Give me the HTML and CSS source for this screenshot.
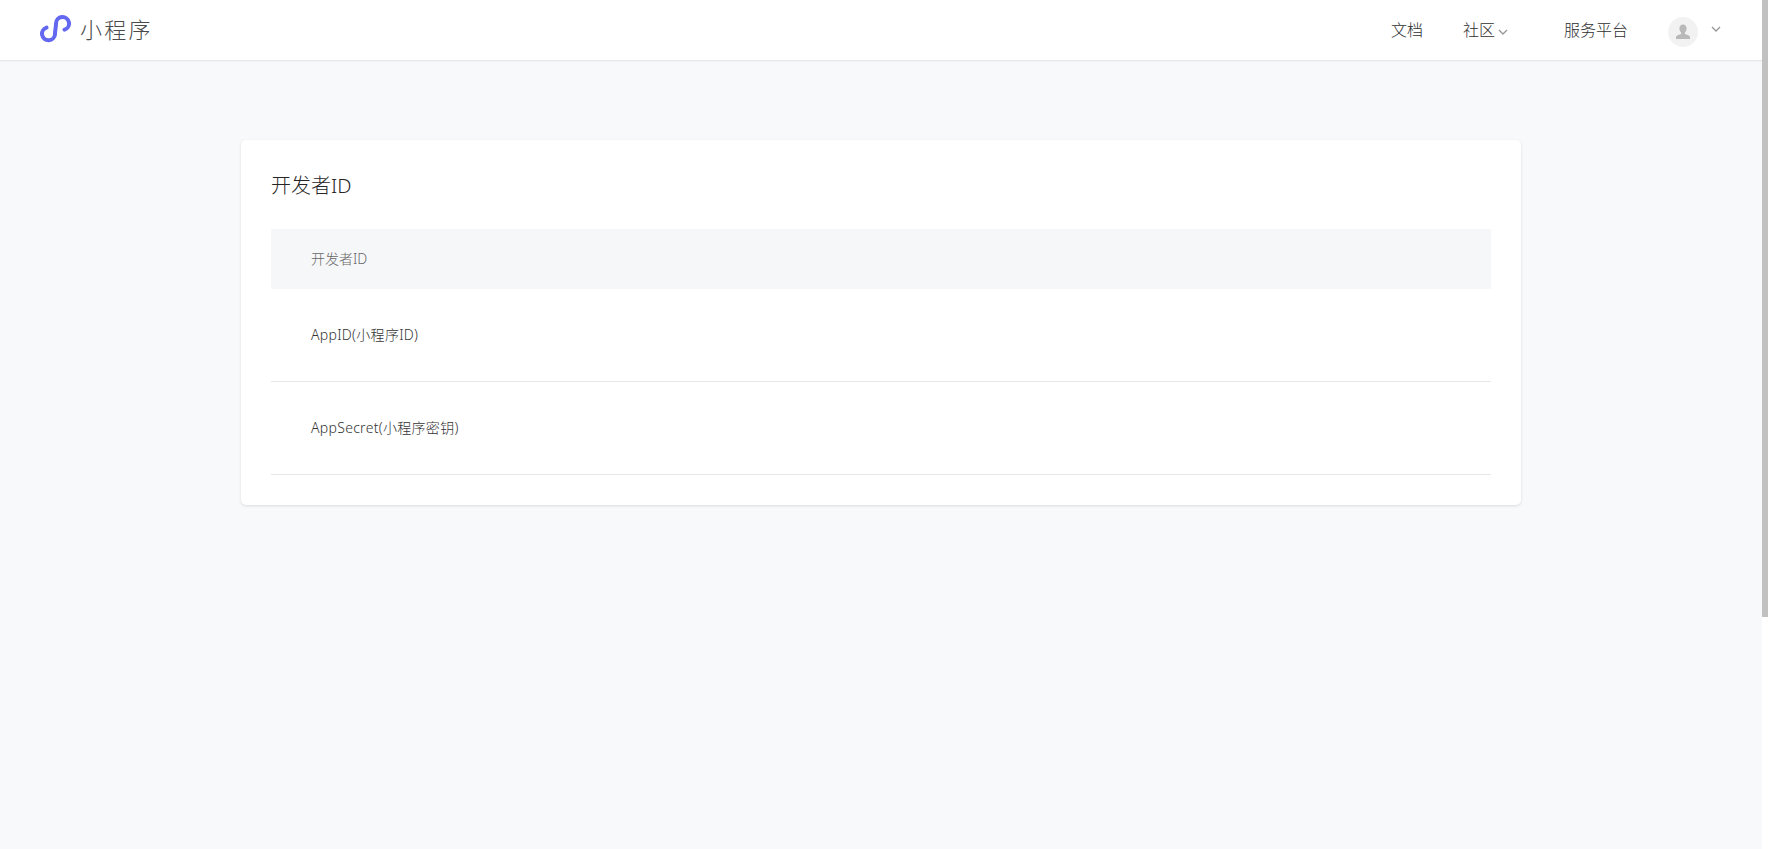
FILE: index.html
```html
<!DOCTYPE html>
<html lang="zh-CN">
<head>
<meta charset="utf-8">
<title>小程序</title>
<link rel="stylesheet" href="styles.css">
</head>
<body>
<header class="topbar">
  <a class="brand">
    <svg class="brand-logo" viewBox="0 0 31 28" width="31" height="28" aria-hidden="true">
      <path d="M6.500 12.600A6.500 6.500 0 1 0 15 19.300C15 15 16 12.500 16 8.500A6.500 6.500 0 1 1 24.500 14.700" fill="none" stroke="#6467f0" stroke-width="4" stroke-linecap="round"/>
    </svg>
    <span class="brand-name">小程序</span>
  </a>
  <nav class="nav">
    <a class="nav-doc">文档</a>
    <a class="nav-community">社区<svg class="chev chev-community" viewBox="0 0 10 6" width="10" height="6"><path d="M1 1l4 4 4-4" fill="none" stroke="#999" stroke-width="1.400"/></svg></a>
    <a class="nav-platform">服务平台</a>
    <span class="avatar"><svg viewBox="0 0 18 18" width="18" height="18"><path d="M9 1.500c2.300 0 3.600 1.800 3.600 4 0 1.700-.7 3.100-1.700 4v1.500c1.700.8 4.300 1.200 5.100 2.800V16H2v-2.200c.8-1.600 3.400-2 5.100-2.800V9.500c-1-.9-1.700-2.300-1.700-4 0-2.200 1.300-4 3.600-4z" fill="#b9b9b9"/></svg></span>
    <svg class="chev chev-user" viewBox="0 0 10 6" width="10" height="6"><path d="M1 1l4 4 4-4" fill="none" stroke="#999" stroke-width="1.400"/></svg>
  </nav>
</header>
<main class="main">
  <section class="card">
    <h2 class="card-title">开发者ID</h2>
    <div class="table">
      <div class="row row-head">开发者ID</div>
      <div class="row">AppID(小程序ID)</div>
      <div class="row">AppSecret(小程序密钥)</div>
    </div>
  </section>
</main>
<div class="scrollbar"><div class="scrollbar-thumb"></div></div>
</body>
</html>
```
FILE: styles.css
```css
* { box-sizing: border-box; }
html { height: 100%; background: #f8f9fb; }
body {
  margin: 0 6px 0 0;
  min-height: 100vh;
  background: #f8f9fb;
  font-family: "Noto Sans", "Noto Sans CJK SC", sans-serif;
  color: #333;
}
.topbar {
  height: 61px;
  background: #fff;
  border-bottom: 1px solid #e6e7e9;
  box-shadow: 0 1px 2px rgba(0,0,0,.03);
  display: flex;
  align-items: center;
  justify-content: space-between;
  padding: 0 41px 0 40px;
}
.brand { display: flex; align-items: center; margin-top: -2px; }
.brand-logo { display: block; margin-right: 9px; }
.brand-name { font-size: 22px; letter-spacing: 2.2px; color: #4a4a4a; font-weight: 300; line-height: 30px; }
.nav { display: flex; align-items: center; font-size: 16px; color: #2e2e2e; font-weight: 300; margin-top: 3px; }
.nav a { display: flex; align-items: center; padding-bottom: 6px; }
.nav-doc { margin-right: 40px; }
.nav-community { margin-right: 56px; }
.chev-community { margin: 6px 0 0 3px; }
.nav-platform { margin-right: 40px; }
.avatar {
  width: 30px; height: 30px; border-radius: 50%;
  background: #f2f2f3;
  display: flex; align-items: center; justify-content: center;
  margin-right: 13px;
}
.chev { display: block; }
.chev-user { margin-top: -6px; }
.main { padding: 79px 0 0 241px; }
.card {
  width: 1280px;
  height: 365px;
  background: #fff;
  border-radius: 5px;
  box-shadow: 0 1px 3px rgba(0,0,0,.12);
  padding: 31px 30px 0;
}
.card-title { margin: 0 0 28px; font-size: 20px; font-weight: 300; line-height: 30px; color: #262626; }
.row {
  height: 93px;
  padding: 0 40px 2px;
  border-bottom: 1px solid #e6e7e9;
  display: flex;
  align-items: center;
  font-size: 14px;
  font-weight: 300;
  letter-spacing: .3px;
  color: #333;
}
.row-head {
  height: 60px;
  border-bottom: 0;
  background: #f6f7f9;
  color: #666;
  letter-spacing: 0;
}
.scrollbar {
  position: fixed;
  top: 0;
  right: 0;
  bottom: 0;
  width: 6px;
  background: #fff;
}
.scrollbar-thumb { height: 617px; background: #c1c1c1; }
```
